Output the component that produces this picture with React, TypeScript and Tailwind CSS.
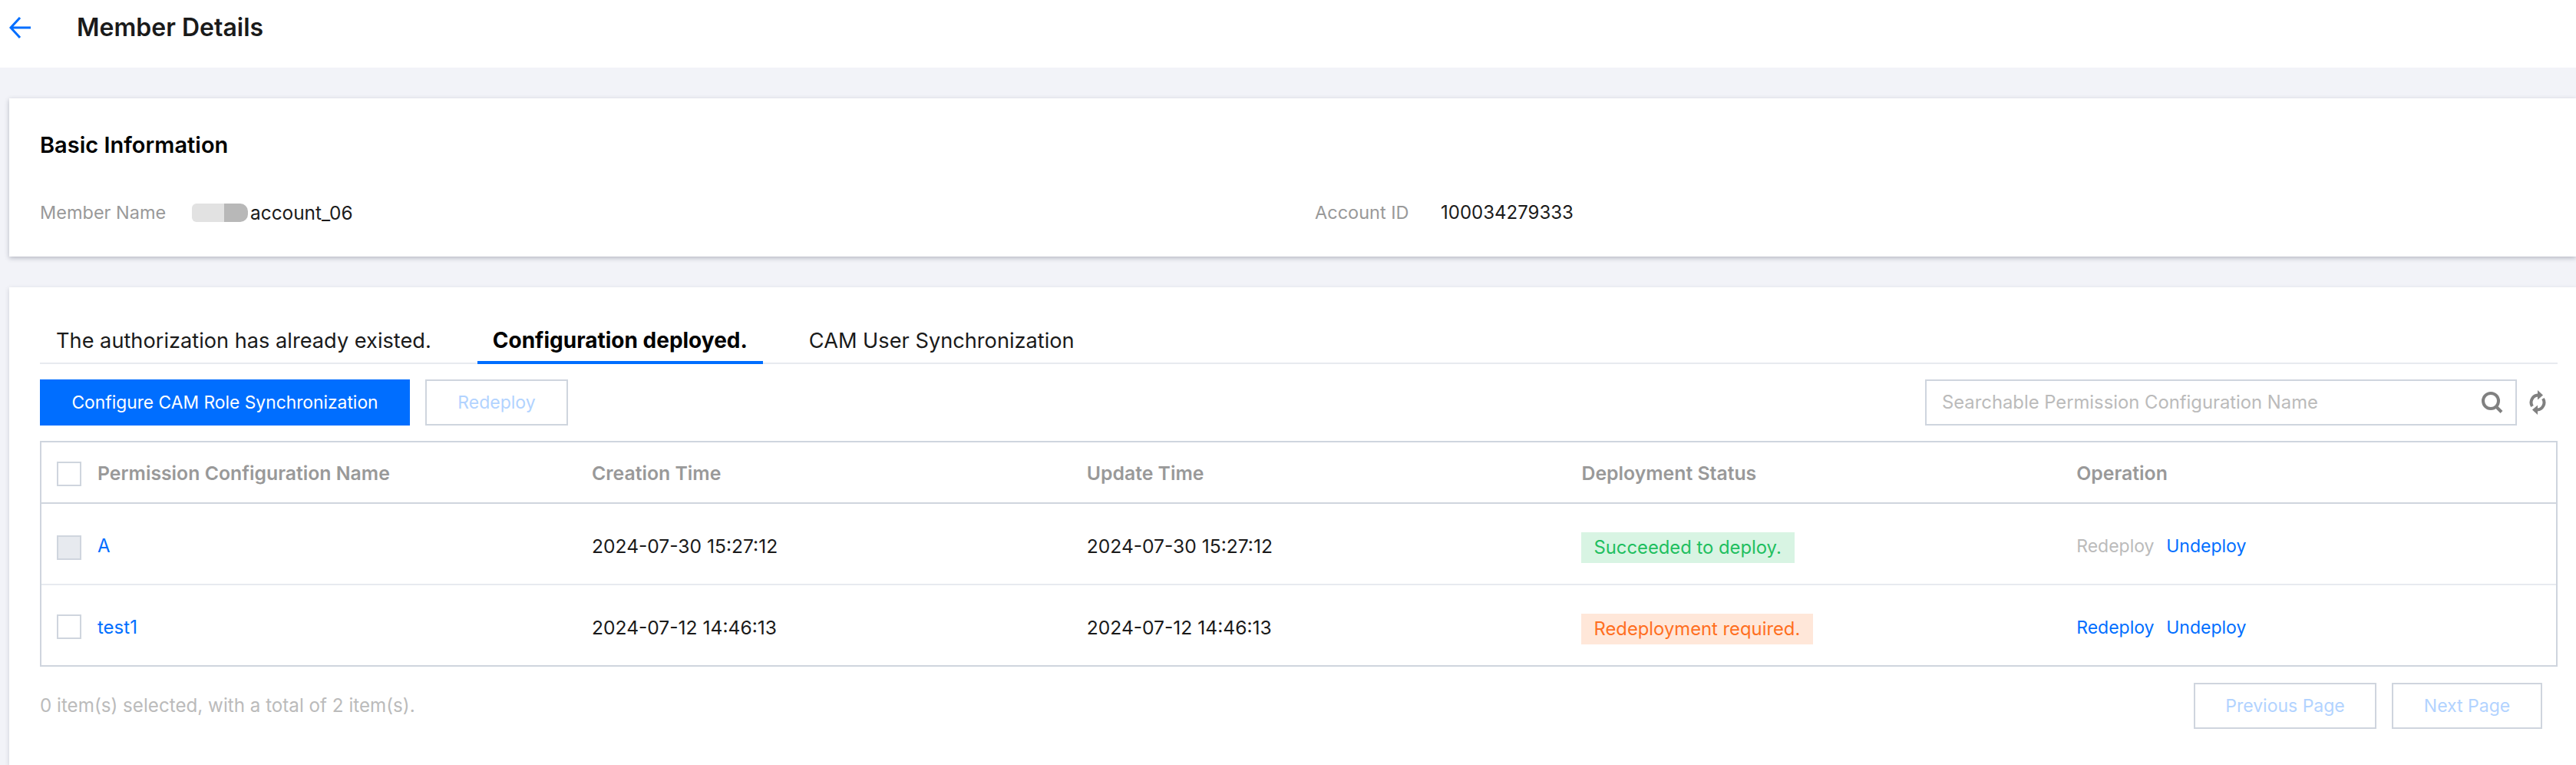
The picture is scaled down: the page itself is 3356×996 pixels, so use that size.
const rows = [
  {
    name: "A",
    created: "2024-07-30 15:27:12",
    updated: "2024-07-30 15:27:12",
    status: "Succeeded to deploy.",
    ok: true,
  },
  {
    name: "test1",
    created: "2024-07-12 14:46:13",
    updated: "2024-07-12 14:46:13",
    status: "Redeployment required.",
    ok: false,
  },
];

const headers = ["Creation Time", "Update Time", "Deployment Status", "Operation"];

function Checkbox({ disabled, className = "" }: { disabled?: boolean; className?: string }) {
  return (
    <span
      className={`block h-[32px] w-[32px] shrink-0 border-2 border-[#cfd5de] ${
        disabled ? "bg-[#e7eaef]" : "bg-white"
      } ${className}`}
    />
  );
}

function GhostButton({ label, width }: { label: string; width: string }) {
  return (
    <button
      type="button"
      className={`h-[60px] border-2 border-[#cfd5de] bg-white text-[23px] text-[#b2d3ff] ${width}`}
    >
      {label}
    </button>
  );
}

export default function App() {
  return (
    <div className="h-[996px] overflow-hidden bg-[#f2f3f8] font-['Inter',sans-serif] text-[24px] text-black">
      {/* Header */}
      <header className="flex h-[88px] items-center bg-white pb-[16px] pl-[12px]">
        <svg className="h-[28px] w-[28px]" viewBox="0 0 28 28" fill="none" stroke="#006eff" strokeWidth="3">
          <path d="M14 1 L2 14 L14 27 M2 14 H28" />
        </svg>
        <h1 className="ml-[60px] text-[32px] font-semibold text-[#1a1a1a]">Member Details</h1>
      </header>

      {/* Basic information */}
      <section className="ml-[12px] mt-[40px] h-[206px] bg-white pl-[40px] pt-[44px] shadow-[0_2px_6px_rgba(54,58,80,0.32)]">
        <h2 className="text-[29px] font-semibold leading-[34px]">Basic Information</h2>
        <div className="mt-[56px] flex items-center leading-[30px]">
          <div className="flex w-[1661px] items-center">
            <span className="w-[198px] text-[23.5px] text-[#999999]">Member Name</span>
            <span className="flex h-[24px] w-[73px] overflow-hidden rounded-[6px]">
              <span className="w-[42px] bg-[#e2e2e2]" />
              <span className="w-[31px] rounded-r-[10px] bg-[#b8b8b8]" />
            </span>
            <span className="ml-[3px] text-[24.4px] text-[#1a1a1a]">account_06</span>
          </div>
          <span className="w-[164px] text-[23.5px] text-[#999999]">Account ID</span>
          <span className="text-[#1a1a1a]">100034279333</span>
        </div>
      </section>

      {/* Tabs and table */}
      <section className="ml-[12px] mt-[40px] bg-white pb-[47px] pl-[40px] pr-[24px] pt-[40px] shadow-[0_2px_6px_rgba(54,58,80,0.2)]">
        <div className="flex h-[60px] gap-[40px] border-b-2 border-[#e7eaef] pl-[1px] text-[27.2px]">
          <div className="flex items-center px-[20px] pt-[2px] text-[#1a1a1a]">The authorization has already existed.</div>
          <div className="-mb-[2px] flex items-center border-b-4 border-[#006eff] px-[20px] pt-[2px] text-[28px] font-bold">
            Configuration deployed.
          </div>
          <div className="flex items-center px-[20px] pt-[2px] text-[#1a1a1a]">CAM User Synchronization</div>
        </div>

        <div className="mt-[20px] flex items-center">
          <button type="button" className="h-[60px] w-[482px] bg-[#006eff] text-[22.8px] text-white">
            Configure CAM Role Synchronization
          </button>
          <GhostButton label="Redeploy" width="ml-[20px] w-[186px]" />
          <div className="ml-auto flex h-[60px] w-[771px] items-center border-2 border-[#cfd5de] pl-[20px] pr-[16px] text-[23.8px] text-[#bbbbbb]">
            <span className="flex-1">Searchable Permission Configuration Name</span>
            <svg className="h-[28px] w-[28px]" viewBox="0 0 28 28" fill="none" stroke="#808080" strokeWidth="4">
              <circle cx="12" cy="12" r="10" />
              <path d="M18.5 19 L26 26.5" />
            </svg>
          </div>
          <svg className="ml-[15px] mr-[14px] h-[32px] w-[24px]" viewBox="0 0 24 32" fill="none" stroke="#808080" strokeWidth="4">
            <path d="M5 21 A9.5 9.5 0 0 1 12.5 6.5" />
            <path d="M19 11 A9.5 9.5 0 0 1 11.5 25.5" />
            <path d="M12 0 L19 6.5 L12 12.5 Z" fill="#808080" stroke="none" />
            <path d="M12 19.5 L5 25.5 L12 32 Z" fill="#808080" stroke="none" />
          </svg>
        </div>

        <div className="mt-[20px] border-2 border-[#cfd5de]">
          <div className="grid h-[80px] grid-cols-[697px_repeat(4,1fr)] items-center border-b-2 border-[#cfd5de] pt-[4px] text-[24.8px] font-semibold text-[#999999]">
            <div className="flex items-center gap-[21px] pl-[20px]">
              <Checkbox />
              <span>Permission Configuration Name</span>
            </div>
            {headers.map((h) => (
              <div key={h} className="pl-[20px]">
                {h}
              </div>
            ))}
          </div>
          {rows.map((r, i) => (
            <div
              key={r.name}
              className={`grid grid-cols-[697px_repeat(4,1fr)] items-center pt-[10px] ${
                i === 0 ? "h-[106px] border-b-2 border-[#e7eaef]" : "h-[104px]"
              }`}
            >
              <div className="flex items-center gap-[21px] pl-[20px]">
                <Checkbox disabled={r.ok} className={i === 1 ? "-mt-[6px]" : ""} />
                <span className="-mt-[4px] text-[#006eff]">{r.name}</span>
              </div>
              <div className="-mt-[4px] pl-[20px] text-[24.6px] text-[#1a1a1a]">{r.created}</div>
              <div className="-mt-[4px] pl-[20px] text-[24.6px] text-[#1a1a1a]">{r.updated}</div>
              <div className="pl-[19px]">
                <span
                  className={`inline-flex h-[40px] items-center px-[17px] text-[23.8px] ${
                    r.ok ? "bg-[#d8f4e3] text-[#1fbf5f]" : "bg-[#ffe7d9] text-[#ff6f1f]"
                  }`}
                >
                  {r.status}
                </span>
              </div>
              <div className="-mt-[4px] flex gap-[16px] pl-[20px] text-[23px]">
                <span className={`w-[101px] ${r.ok ? "text-[#bbbbbb]" : "text-[#006eff]"}`}>Redeploy</span>
                <span className="text-[#006eff]">Undeploy</span>
              </div>
            </div>
          ))}
        </div>

        <div className="mt-[21px] flex items-center pr-[20px]">
          <span className="text-[24.2px] text-[#bbbbbb]">0 item(s) selected, with a total of 2 item(s).</span>
          <div className="ml-auto flex gap-[20px]">
            <GhostButton label="Previous Page" width="w-[238px]" />
            <GhostButton label="Next Page" width="w-[196px]" />
          </div>
        </div>
      </section>
    </div>
  );
}
